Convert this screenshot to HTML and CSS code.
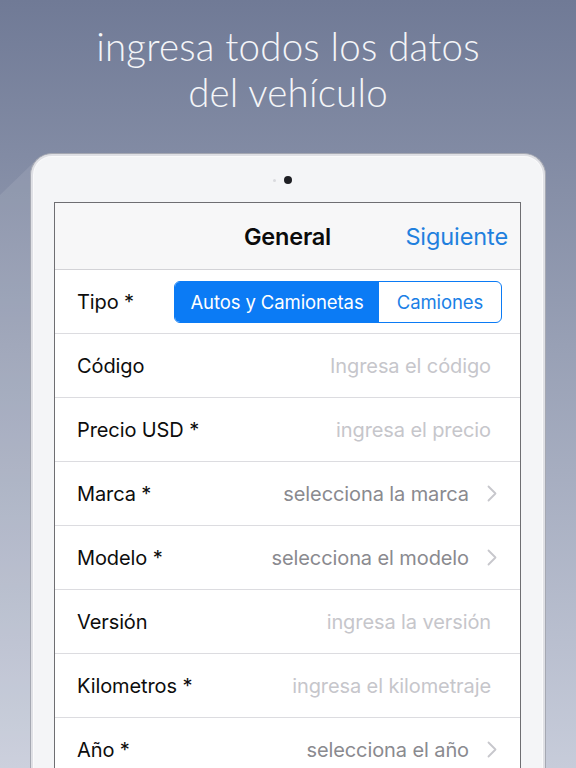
FILE: index.html
```html
<!DOCTYPE html>
<html lang="es">
<head>
<meta charset="utf-8">
<title>Ingresa todos los datos del vehículo</title>
<link rel="stylesheet" href="styles.css">
</head>
<body>
<div class="page">
  <div class="glare"></div>
  <h1 class="headline">ingresa todos los datos<br>del vehículo</h1>
  <div class="device">
    <div class="camera-row"><span class="sensor"></span><span class="camera"></span><span></span></div>
    <div class="screen">
      <div class="navbar">
        <span></span>
        <span class="nav-title">General</span>
        <span class="nav-action">Siguiente</span>
      </div>
      <div class="row row--segment">
        <span class="label">Tipo *</span>
        <div class="segmented">
          <span class="seg seg--on">Autos y Camionetas</span>
          <span class="seg">Camiones</span>
        </div>
      </div>
      <div class="row">
        <span class="label">Código</span>
        <span class="placeholder">Ingresa el código</span>
      </div>
      <div class="row">
        <span class="label">Precio USD *</span>
        <span class="placeholder">ingresa el precio</span>
      </div>
      <div class="row row--select">
        <span class="label">Marca *</span>
        <span class="value">selecciona la marca</span>
        <svg class="chevron" viewBox="0 0 10 17" width="10" height="17"><path d="M1.5 1.5 L8.5 8.5 L1.5 15.5" fill="none" stroke="#c7c7cc" stroke-width="1.8" stroke-linecap="round" stroke-linejoin="round"/></svg>
      </div>
      <div class="row row--select">
        <span class="label">Modelo *</span>
        <span class="value">selecciona el modelo</span>
        <svg class="chevron" viewBox="0 0 10 17" width="10" height="17"><path d="M1.5 1.5 L8.5 8.5 L1.5 15.5" fill="none" stroke="#c7c7cc" stroke-width="1.8" stroke-linecap="round" stroke-linejoin="round"/></svg>
      </div>
      <div class="row">
        <span class="label">Versión</span>
        <span class="placeholder">ingresa la versión</span>
      </div>
      <div class="row">
        <span class="label">Kilometros *</span>
        <span class="placeholder">ingresa el kilometraje</span>
      </div>
      <div class="row row--select">
        <span class="label">Año *</span>
        <span class="value">selecciona el año</span>
        <svg class="chevron" viewBox="0 0 10 17" width="10" height="17"><path d="M1.5 1.5 L8.5 8.5 L1.5 15.5" fill="none" stroke="#c7c7cc" stroke-width="1.8" stroke-linecap="round" stroke-linejoin="round"/></svg>
      </div>
    </div>
  </div>
</div>
</body>
</html>
```
FILE: styles.css
```css
* { box-sizing: border-box; }

html, body {
  margin: 0;
  padding: 0;
}

body {
  width: 576px;
  height: 768px;
  overflow: hidden;
  font-family: Inter, "Noto Sans", "Liberation Sans", sans-serif;
}

.page {
  position: relative;
  width: 576px;
  height: 768px;
  overflow: hidden;
  background: linear-gradient(to bottom, #707a96 0%, #98a0b5 45%, #c7ccda 100%);
}

.glare {
  position: absolute;
  left: 0;
  top: 0;
  width: 40px;
  height: 768px;
  background: rgba(255, 255, 255, 0.09);
  clip-path: polygon(0 195px, 34px 162px, 34px 768px, 0 768px);
}

.headline {
  position: relative;
  margin: 0;
  padding-top: 23px;
  font-family: Lato, "Open Sans", sans-serif;
  font-weight: 300;
  font-size: 38.5px;
  line-height: 46px;
  letter-spacing: 0.2px;
  color: #f4f5f8;
  text-align: center;
}

.device {
  position: relative;
  margin: 38px 0 0 30px;
  width: 516px;
  height: 700px;
  padding: 0 24px 0 23px;
  background: #f4f5f7;
  border: 1px solid #a5a8b2;
  border-bottom: none;
  border-radius: 22px 22px 0 0;
  box-shadow: inset 0 0 0 2px #dfe0e5, inset 0 0 0 3px #fafafb;
}

.camera-row {
  height: 48px;
  display: grid;
  grid-template-columns: 1fr 8px 1fr;
  align-items: center;
  column-gap: 8px;
  padding-top: 4px;
}

.sensor {
  justify-self: end;
  width: 3px;
  height: 3px;
  border-radius: 50%;
  background: #d9dade;
}

.camera {
  width: 8px;
  height: 8px;
  border-radius: 50%;
  background: #1e1f24;
}

.screen {
  width: 467px;
  height: 620px;
  background: #ffffff;
  border: 1px solid #6e6e72;
  border-bottom: none;
}

.navbar {
  height: 67px;
  display: grid;
  grid-template-columns: 1fr auto 1fr;
  align-items: center;
  background: #f7f7f8;
  border-bottom: 1px solid #d3d3d7;
  padding: 0 12px;
}

.nav-title {
  font-size: 23.5px;
  font-weight: 600;
  color: #0b0b0b;
  letter-spacing: -0.2px;
}

.nav-action {
  justify-self: end;
  font-size: 23.5px;
  color: #1f80de;
  letter-spacing: -0.1px;
}

.row {
  height: 64px;
  display: flex;
  align-items: center;
  padding: 0 29px 0 22px;
  border-bottom: 1px solid #dcdce0;
  font-size: 20px;
  letter-spacing: -0.1px;
}

.row--segment {
  height: 64px;
  padding-right: 18px;
}

.row--select {
  padding-right: 23px;
}

.label {
  color: #0d0d0d;
  flex: 0 0 auto;
}

.placeholder {
  margin-left: auto;
  color: #c6c6cb;
}

.value {
  margin-left: auto;
  color: #8a8a8f;
}

.chevron {
  margin-left: 18px;
  flex: 0 0 auto;
}

.segmented {
  margin-left: auto;
  display: flex;
  width: 328px;
  height: 42px;
  border: 1px solid #0b7bf5;
  border-radius: 6px;
  overflow: hidden;
}

.seg {
  display: flex;
  align-items: center;
  justify-content: center;
  font-size: 18.5px;
  color: #1a7fe6;
  flex: 0 0 122px;
}

.seg--on {
  flex: 0 0 204px;
  background: #0b7bf5;
  color: #ffffff;
}
```
